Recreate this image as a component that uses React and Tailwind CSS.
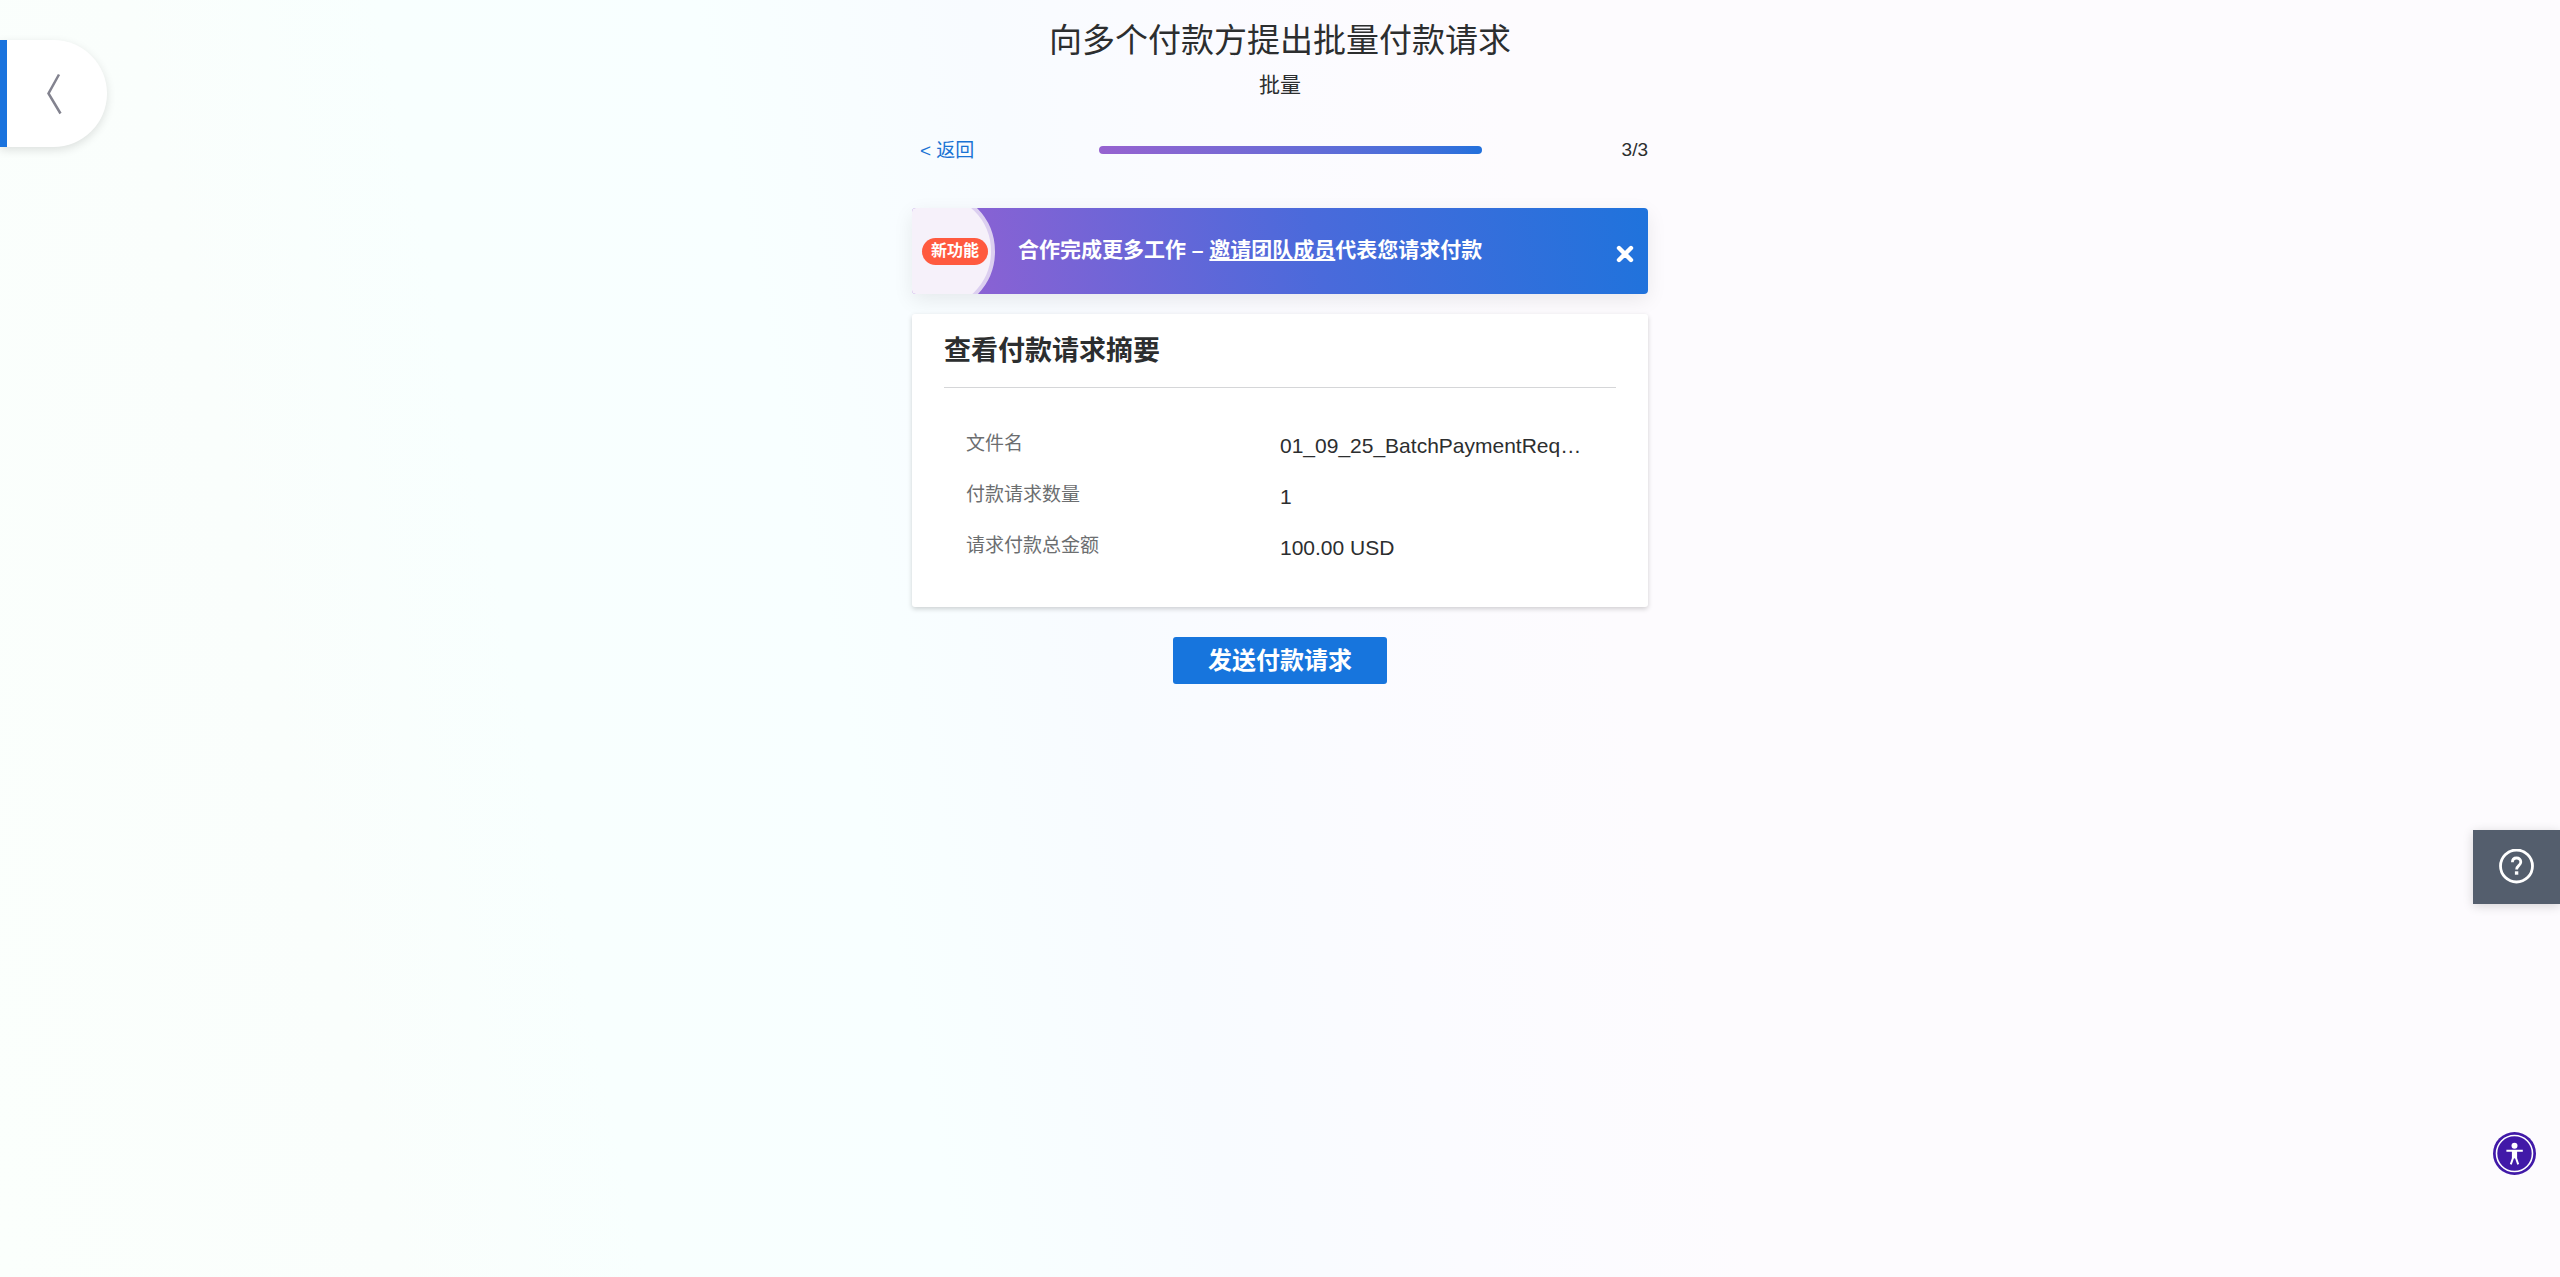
const SUMMARY = [
  { label: '文件名', value: '01_09_25_BatchPaymentReq…' },
  { label: '付款请求数量', value: '1' },
  { label: '请求付款总金额', value: '100.00 USD' },
];

function BackTab() {
  return (
    <button
      type="button"
      aria-label="返回"
      className="absolute top-10 left-0 flex h-[107px] w-[107px] items-center rounded-r-full border-l-7 border-[#1a73de] bg-white pl-10 shadow-[0_3px_10px_rgba(0,0,0,0.12)]"
    >
      <svg viewBox="0 0 16 42" className="h-[42px] w-4" fill="none" stroke="#83838f" strokeWidth="2.5">
        <path d="M12 1.5 1.5 20.5 13.5 40.5" />
      </svg>
    </button>
  );
}

function Progress() {
  return (
    <div className="mt-8 flex h-9 items-center">
      <div className="w-[187px] pt-0.5 pl-2">
        <a href="#back" className="text-[19px] text-[#1a73d4]">
          &lt; 返回
        </a>
      </div>
      <div className="h-2 flex-1 rounded-full bg-linear-to-r from-[#9662d0] to-[#2170dc]" />
      <span className="w-[166px] text-right text-[19px]">3/3</span>
    </div>
  );
}

function Banner() {
  return (
    <div className="relative mt-10 flex h-[86px] items-center overflow-hidden rounded-[4px] bg-[linear-gradient(80deg,#9660d2_0%,#4a6adb_55%,#1f73dc_100%)] pr-3 pl-2.5 text-white">
      <div className="absolute -top-[18px] -left-10 size-[123px] rounded-full border-4 border-[#dccff0] bg-[#f6f1fa]" />
      <span className="relative flex h-[27px] w-[66px] items-center justify-center rounded-full bg-[#ff5a3f] text-base font-bold">
        新功能
      </span>
      <p className="ml-[30px] flex-1 pb-0.5 text-[21px] font-bold">
        合作完成更多工作 – <a href="#invite" className="underline">邀请团队成员</a>代表您请求付款
      </p>
      <button type="button" aria-label="关闭" className="mt-1.5 p-0.5">
        <svg viewBox="0 0 18 18" className="size-[18px]" stroke="#fff" strokeWidth="4.4" strokeLinecap="round">
          <path d="M3 3 15 15M15 3 3 15" />
        </svg>
      </button>
    </div>
  );
}

function SummaryCard() {
  return (
    <section className="mt-5 rounded-[3px] bg-white px-8 pb-[34px] shadow-[0_2px_5px_rgba(0,0,0,0.18)]">
      <h2 className="border-b border-[#d5d6d8] pt-[17px] pb-4 text-[27px] leading-10 font-bold">
        查看付款请求摘要
      </h2>
      <dl className="mt-8 px-[22px]">
        {SUMMARY.map((row) => (
          <div key={row.label} className="flex h-[51px] items-center">
            <dt className="w-1/2 pb-0.5 text-[19px] text-[#6c6e70]">{row.label}</dt>
            <dd className="w-1/2 truncate text-[21px]">{row.value}</dd>
          </div>
        ))}
      </dl>
    </section>
  );
}

export default function App() {
  return (
    <div className="relative min-h-screen bg-[linear-gradient(78deg,#fbfffc_0%,#fafefc_14%,#f8fffe_23%,#f8ffff_34%,#f8fbff_44%,#fbfbff_52%,#fdfbfe_62%,#fdfbfe_100%)] font-['Liberation_Sans','Noto_Sans_CJK_SC',sans-serif] text-[#2c2e2f]">
      <BackTab />

      <main className="mx-auto w-full max-w-[736px] pt-[17px]">
        <header className="text-center">
          <h1 className="text-[33px] leading-12">向多个付款方提出批量付款请求</h1>
          <p className="mt-1 text-[21px] leading-[31px]">批量</p>
        </header>
        <Progress />
        <div className="rounded-[4px] shadow-[0_6px_20px_rgba(0,0,0,0.08)]">
          <Banner />
        </div>
        <SummaryCard />
        <div className="mt-[30px] flex justify-center">
          <button
            type="button"
            className="h-[47px] w-[214px] rounded-[3px] bg-[#1775dd] text-2xl font-bold text-white"
          >
            发送付款请求
          </button>
        </div>
      </main>

      <button
        type="button"
        aria-label="帮助"
        className="absolute top-[830px] right-0 flex h-[74px] w-[87px] items-center justify-center bg-[#545e6d] shadow-[0_2px_10px_rgba(0,0,0,0.16)]"
      >
        <svg viewBox="0 0 36 36" className="size-9" fill="none" stroke="#fff" strokeWidth="2.8">
          <circle cx="17.5" cy="17" r="16" />
          <path d="M13.4 13.2c0-2.6 1.8-4.2 4.2-4.2s4.2 1.6 4.2 4c0 3.6-4.2 3.6-4.2 7.4" />
          <path d="M15.9 24h3.4" strokeWidth="3.4" />
        </svg>
      </button>

      <button type="button" aria-label="无障碍" className="absolute top-[1132px] right-6 rounded-full">
        <svg viewBox="0 0 43 43" className="size-[43px]">
          <circle cx="21.5" cy="21.5" r="21.5" fill="#4119a8" />
          <circle cx="21.5" cy="21.5" r="18" fill="none" stroke="#fff" strokeWidth="1.6" />
          <circle cx="21.5" cy="13.8" r="3" fill="#fff" />
          <path
            d="M13.4 18.8h16.4M20 19v7l-2.2 6.4M23 19v7l2.2 6.4"
            fill="none"
            stroke="#fff"
            strokeWidth="2"
            strokeLinejoin="round"
          />
          <path d="M18.9 18.4h5.2v8h-5.2z" fill="#fff" />
        </svg>
      </button>
    </div>
  );
}
